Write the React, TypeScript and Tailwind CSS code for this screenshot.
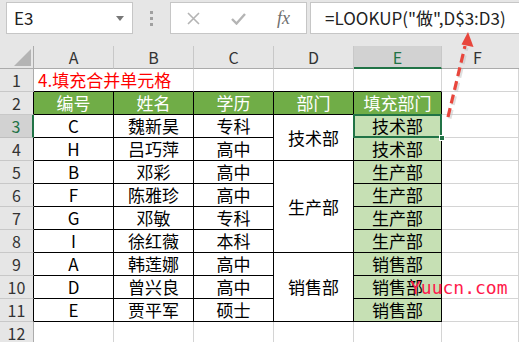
import React from "react";

const FONT = { fontFamily: '"Noto Sans CJK SC", "Noto Sans", sans-serif' };

const dataRows = [
  { n: 3, a: "C", b: "魏新昊", c: "专科", d: "技术部", span: 2, e: "技术部" },
  { n: 4, a: "H", b: "吕巧萍", c: "高中", e: "技术部" },
  { n: 5, a: "B", b: "邓彩", c: "高中", d: "生产部", span: 4, e: "生产部" },
  { n: 6, a: "F", b: "陈雅珍", c: "高中", e: "生产部" },
  { n: 7, a: "G", b: "邓敏", c: "专科", e: "生产部" },
  { n: 8, a: "I", b: "徐红薇", c: "本科", e: "生产部" },
  { n: 9, a: "A", b: "韩莲娜", c: "高中", d: "销售部", span: 3, e: "销售部" },
  { n: 10, a: "D", b: "曾兴良", c: "高中", e: "销售部" },
  { n: 11, a: "E", b: "贾平军", c: "硕士", e: "销售部" },
];

const spanClass: Record<number, string> = {
  2: "row-span-2",
  3: "row-span-3",
  4: "row-span-4",
};

function RowHead({ n, dark }: { n: number; dark?: boolean }) {
  if (n === 3) {
    return (
      <div className="bg-[#d2d2d2] border-b border-[#bfbfbf] border-r-2 border-r-[#217346] flex items-center justify-center text-[16px] text-[#217346]">
        {n}
      </div>
    );
  }
  return (
    <div
      className={
        "bg-[#e6e6e6] border-b border-[#c8c8c8] border-r flex items-center justify-center text-[16px] text-[#333] " +
        (dark ? "border-r-black" : "border-r-[#ababab]")
      }
    >
      {n}
    </div>
  );
}

export default function App() {
  const cell = "border-r border-b border-black flex items-center justify-center text-[17px] text-black";
  const grid = "border-r border-b border-[#d4d4d4]";

  return (
    <div className="relative w-[519px] h-[342px] overflow-hidden bg-white" style={FONT}>
      {/* Toolbar */}
      <div className="h-[46px] bg-[#e6e6e6] flex items-start pt-[2px] pl-[6px]">
        <div className="w-[127px] h-[32px] bg-white border border-[#c6c6c6] flex items-center justify-between pl-[7px] pr-[8px]">
          <span className="text-[17px] text-[#222]">E3</span>
          <span className="w-0 h-0 border-l-[4px] border-r-[4px] border-t-[5px] border-l-transparent border-r-transparent border-t-[#777]" />
        </div>
        <div className="w-[37px] flex flex-col items-center gap-[3px] pt-[9px]">
          <span className="w-[3px] h-[3px] bg-[#a0a0a0]" />
          <span className="w-[3px] h-[3px] bg-[#a0a0a0]" />
          <span className="w-[3px] h-[3px] bg-[#a0a0a0]" />
        </div>
        <div className="w-[137px] h-[32px] bg-white border border-[#c6c6c6] flex items-center">
          <div className="w-[45px] flex justify-center">
            <svg width="13" height="13" viewBox="0 0 13 13">
              <path d="M1 1 L12 12 M12 1 L1 12" stroke="#b4b4b4" strokeWidth="1.6" />
            </svg>
          </div>
          <div className="w-[45px] flex justify-center">
            <svg width="15" height="13" viewBox="0 0 15 13">
              <path d="M1 7 L5.5 11.5 L14 2" stroke="#b4b4b4" strokeWidth="2.4" fill="none" />
            </svg>
          </div>
          <div className="w-[45px] flex justify-center">
            <span className="italic text-[18px] text-[#6f6f6f]" style={{ fontFamily: '"Liberation Serif", serif' }}>
              fx
            </span>
          </div>
        </div>
        <div className="ml-[3px] flex-1 h-[32px] bg-white border border-r-0 border-[#c6c6c6] flex items-center pl-[14px]">
          <span className="text-[17px] text-[#222]">=LOOKUP("做",D$3:D3)</span>
        </div>
      </div>

      {/* Sheet */}
      <div className="grid grid-cols-[34px_80px_80px_80px_80px_88px_1fr] grid-rows-[repeat(13,23px)]">
        {/* column headers */}
        <div className="bg-[#e6e6e6] border-r border-b border-[#ababab] relative">
          <svg className="absolute right-[2px] bottom-[2px]" width="17" height="17" viewBox="0 0 17 17">
            <path d="M17 0 L17 17 L0 17 Z" fill="#b4b4b4" />
          </svg>
        </div>
        {["A", "B", "C", "D"].map((c) => (
          <div key={c} className="bg-[#e6e6e6] border-r border-b border-r-[#c8c8c8] border-b-[#ababab] flex items-center justify-center text-[16px] text-[#333]">
            {c}
          </div>
        ))}
        <div className="bg-[#d2d2d2] border-r border-r-[#c8c8c8] border-b-2 border-b-[#217346] flex items-center justify-center text-[16px] text-[#217346]">
          E
        </div>
        <div className="bg-[#e6e6e6] border-b border-[#ababab] flex items-center pl-[31px] text-[16px] text-[#333]">
          F
        </div>

        {/* row 1 */}
        <RowHead n={1} />
        <div className="border-b border-black flex items-center pl-[4px] text-[17px] text-[#ff0000] whitespace-nowrap overflow-visible z-10">
          4.填充合并单元格
        </div>
        <div className="border-r border-r-[#d4d4d4] border-b border-b-black" />
        <div className="border-r border-r-[#d4d4d4] border-b border-b-black" />
        <div className="border-r border-r-[#d4d4d4] border-b border-b-black" />
        <div className="border-r border-r-[#d4d4d4] border-b border-b-black" />
        <div className={grid} />

        {/* row 2 */}
        <RowHead n={2} dark />
        {["编号", "姓名", "学历", "部门", "填充部门"].map((h) => (
          <div key={h} className="bg-[#70ad47] border-r border-b border-black flex items-center justify-center text-[17px] text-white">
            {h}
          </div>
        ))}
        <div className={grid} />

        {/* data rows */}
        {dataRows.map((r) => (
          <React.Fragment key={r.n}>
            <RowHead n={r.n} dark />
            <div className={cell}>{r.a}</div>
            <div className={cell}>{r.b}</div>
            <div className={cell}>{r.c}</div>
            {r.d && <div className={cell + " " + spanClass[r.span!]}>{r.d}</div>}
            {r.n === 3 ? (
              <div className={cell + " bg-[#c6e0b4] relative"}>
                {r.e}
                <div className="absolute -left-[1px] -top-[1px] right-[-1px] bottom-[-1px] border-2 border-[#217346]" />
                <div className="absolute right-[-4px] bottom-[-4px] w-[6px] h-[6px] bg-[#217346] border border-white" />
              </div>
            ) : (
              <div className={cell + " bg-[#c6e0b4]"}>{r.e}</div>
            )}
            <div className={grid} />
          </React.Fragment>
        ))}

        {/* row 12 */}
        <RowHead n={12} />
        <div className={grid} />
        <div className={grid} />
        <div className={grid} />
        <div className={grid} />
        <div className={grid} />
        <div className={grid} />
      </div>

      {/* red dashed arrow */}
      <svg className="absolute left-0 top-0 pointer-events-none" width="519" height="342" viewBox="0 0 519 342">
        <line x1="448" y1="117" x2="465" y2="46" stroke="#c0c0c0" strokeOpacity="0.5" strokeWidth="4" strokeDasharray="9 5" transform="translate(1.5 1.5)" />
        <line x1="448" y1="117" x2="465" y2="46" stroke="#e8463c" strokeWidth="3.2" strokeDasharray="9 5" />
        <path d="M468 32 L473.5 47 L461.5 44.5 Z" fill="#e8463c" />
      </svg>

      {/* watermark */}
      <div
        className="absolute left-[410px] top-[276px] text-[18px] leading-[24px] text-[#ff1a4b] pointer-events-none"
        style={{ fontFamily: '"DejaVu Sans Mono", monospace' }}
      >
        Yuucn.com
      </div>
    </div>
  );
}
